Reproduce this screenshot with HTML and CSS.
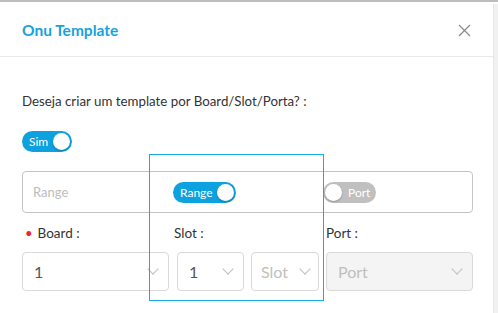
FILE: index.html
```html
<!DOCTYPE html>
<html lang="pt">
<head>
  <meta charset="UTF-8" />
  <title>Onu Template</title>
  <link rel="stylesheet" href="styles.css">
</head>
<body>
  <div class="page">
    <div class="modal">
      <div class="modal-header">
        <h3>Onu Template</h3>
        <span class="close">
          <svg width="13" height="13" viewBox="0 0 13 13"><path d="M1 1L12 12M12 1L1 12" stroke="#8c8c8c" stroke-width="1.3" fill="none"/></svg>
        </span>
      </div>

      <div class="modal-body">
        <p class="question">Deseja criar um template por Board/Slot/Porta? :</p>

        <div class="switch on sim"><span class="label">Sim</span><span class="knob"></span></div>

        <div class="range-box">
          <span class="placeholder">Range</span>
          <div class="switch on range"><span class="label">Range</span><span class="knob"></span></div>
          <div class="switch off port"><span class="knob"></span><span class="label">Port</span></div>
        </div>

        <div class="fields">
          <div class="field">
            <label><span class="req">•</span>Board :</label>
            <div class="select"><span class="value">1</span><span class="arrow"></span></div>
          </div>
          <div class="field">
            <label>Slot :</label>
            <div class="pair">
              <div class="select small"><span class="value">1</span><span class="arrow"></span></div>
              <div class="select small tight"><span class="value ph">Slot</span><span class="arrow"></span></div>
            </div>
          </div>
          <div class="field">
            <label>Port :</label>
            <div class="select disabled"><span class="value ph">Port</span><span class="arrow"></span></div>
          </div>
        </div>

        <div class="highlight"></div>
      </div>
    </div>
    <div class="scroll-strip"></div>
  </div>
</body>
</html>
```

FILE: styles.css
```css
* {
  margin: 0;
  padding: 0;
  box-sizing: border-box;
}

body {
  font-family: 'Lato', 'Liberation Sans', sans-serif;
  background-color: #fff;
  color: #333;
  border-top: 2px solid #bdbdbd;
  height: 313px;
  overflow: hidden;
}

.page {
  display: flex;
  height: 311px;
}

.modal {
  width: 493px;
  background: #fff;
}

.scroll-strip {
  flex: 1;
  background: #f1f1f1;
  border-left: 1px solid #e6e6e6;
  margin-top: 2px;
}

.modal-header {
  height: 55px;
  border-bottom: 1px solid #e8e8e8;
  display: flex;
  align-items: center;
  justify-content: space-between;
  padding: 0 22px 0 22px;
}

.modal-header h3 {
  font-size: 15.5px;
  font-weight: 700;
  color: #14a3e0;
  margin-top: 2px;
}

.close {
  display: flex;
  margin-top: 3px;
}

.modal-body {
  position: relative;
  padding: 34px 20px 0 22px;
}

.question {
  font-size: 13.3px;
  line-height: 20px;
}

.switch {
  display: flex;
  align-items: center;
  height: 21px;
  border-radius: 11px;
  padding: 0 2px;
  color: #fff;
  font-size: 12px;
}

.switch.on {
  background: #0ea1e0;
}

.switch.off {
  background: #c0c0c0;
}

.switch .label {
  flex: 1;
  padding-left: 5px;
}

.switch.off .label {
  padding-left: 6px;
}

.switch .knob {
  width: 17px;
  height: 17px;
  border-radius: 50%;
  background: #fff;
  box-shadow: 0 1px 2px rgba(0, 0, 0, 0.25);
}

.sim {
  width: 50px;
  margin-top: 20px;
}

.range-box {
  margin-top: 19px;
  width: 451px;
  height: 42px;
  border: 1px solid #c4c4c4;
  border-radius: 4px;
  display: flex;
  align-items: center;
  padding-left: 10px;
}

.placeholder {
  width: 140px;
  font-size: 13px;
  color: #bdbdbd;
}

.range {
  width: 63px;
}

.port {
  width: 53px;
  margin-left: 87px;
}

.fields {
  display: grid;
  grid-template-columns: 147px 147px 147px;
  gap: 5px;
  margin-top: 11px;
}

.field label {
  display: block;
  font-size: 13.5px;
  line-height: 18px;
  height: 28px;
}

.req {
  color: #f5222d;
  font-size: 13px;
  margin: 0 5px 0 3px;
}

.pair {
  display: flex;
  gap: 7px;
  padding-left: 3px;
}

.select {
  height: 39px;
  border: 1px solid #d9d9d9;
  border-radius: 4px;
  display: flex;
  align-items: center;
  padding: 0 11px 0 11px;
  font-size: 16px;
}

.select .value {
  flex: 1;
  color: #555;
}

.select .value.ph {
  color: #bfbfbf;
}

.select.small {
  width: 67px;
}

.select.tight {
  width: 68px;
  padding: 0 9px;
}

.select.disabled {
  background: #f4f4f4;
}

.arrow {
  width: 8px;
  height: 8px;
  border-right: 1px solid #bfbfbf;
  border-bottom: 1px solid #bfbfbf;
  transform: rotate(45deg);
  margin-top: -5px;
}

.highlight {
  position: absolute;
  left: 149px;
  top: 97px;
  width: 175px;
  height: 147px;
  border: 1px solid #14ace6;
  pointer-events: none;
}
```
